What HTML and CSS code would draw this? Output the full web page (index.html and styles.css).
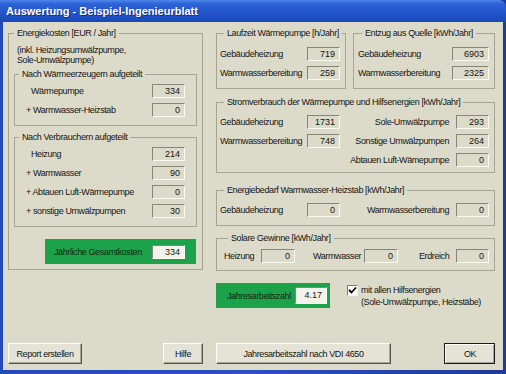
FILE: index.html
```html
<!DOCTYPE html>
<html lang="de">
<head>
    <meta charset="UTF-8">
    <title>Auswertung - Beispiel-Ingenieurblatt</title>
    <link rel="stylesheet" href="styles.css">
</head>
<body>
    <div class="window">
        <div class="titlebar">
            <span class="title">Auswertung - Beispiel-Ingenieurblatt</span>
        </div>
        <div class="client">
            <div class="main">
                <!-- linke Spalte: Kosten -->
                <fieldset class="group costs">
                    <legend>Energiekosten [EUR / Jahr]</legend>
                    <p class="note">(inkl. Heizungsumwälzpumpe,<br>Sole-Umwälzpumpe)</p>
                    <fieldset class="group sub sub-first">
                        <legend>Nach Wärmeerzeugern aufgeteilt</legend>
                        <div class="row"><span class="lbl plain">Wärmepumpe</span><span class="field">334</span></div>
                        <div class="row"><span class="lbl">+ Warmwasser-Heizstab</span><span class="field">0</span></div>
                    </fieldset>
                    <fieldset class="group sub sub-second">
                        <legend>Nach Verbrauchern aufgeteilt</legend>
                        <div class="row"><span class="lbl plain">Heizung</span><span class="field">214</span></div>
                        <div class="row"><span class="lbl">+ Warmwasser</span><span class="field">90</span></div>
                        <div class="row"><span class="lbl">+ Abtauen Luft-Wärmepumpe</span><span class="field">0</span></div>
                        <div class="row"><span class="lbl">+ sonstige Umwälzpumpen</span><span class="field">30</span></div>
                    </fieldset>
                    <div class="highlight total">
                        <span class="hl-label">Jährliche Gesamtkosten</span>
                        <span class="field light">334</span>
                    </div>
                </fieldset>

                <!-- rechte Spalte: Energien -->
                <div class="right">
                    <div class="pair">
                        <fieldset class="group run">
                            <legend>Laufzeit Wärmepumpe [h/Jahr]</legend>
                            <div class="grid2">
                                <span>Gebäudeheizung</span><span class="field">719</span>
                                <span>Warmwasserbereitung</span><span class="field">259</span>
                            </div>
                        </fieldset>
                        <fieldset class="group source">
                            <legend>Entzug aus Quelle [kWh/Jahr]</legend>
                            <div class="grid2">
                                <span>Gebäudeheizung</span><span class="field wide">6903</span>
                                <span>Warmwasserbereitung</span><span class="field wide">2325</span>
                            </div>
                        </fieldset>
                    </div>

                    <fieldset class="group power">
                        <legend>Stromverbrauch der Wärmepumpe und Hilfsenergien [kWh/Jahr]</legend>
                        <div class="grid4">
                            <span>Gebäudeheizung</span><span class="field">1731</span>
                            <span class="rlbl">Sole-Umwälzpumpe</span><span class="field">293</span>
                            <span>Warmwasserbereitung</span><span class="field">748</span>
                            <span class="rlbl">Sonstige Umwälzpumpen</span><span class="field">264</span>
                            <span></span><span></span>
                            <span class="rlbl">Abtauen Luft-Wämepumpe</span><span class="field">0</span>
                        </div>
                    </fieldset>

                    <fieldset class="group heater">
                        <legend>Energiebedarf Warmwasser-Heizstab [kWh/Jahr]</legend>
                        <div class="grid4">
                            <span>Gebäudeheizung</span><span class="field">0</span>
                            <span class="rlbl">Warmwasserbereitung</span><span class="field">0</span>
                        </div>
                    </fieldset>

                    <fieldset class="group solar">
                        <legend>Solare Gewinne [kWh/Jahr]</legend>
                        <div class="grid6">
                            <span>Heizung</span><span class="field">0</span>
                            <span class="pad-ww">Warmwasser</span><span class="field">0</span>
                            <span class="pad-erd">Erdreich</span><span class="field">0</span>
                        </div>
                    </fieldset>

                    <div class="jaz-row">
                        <div class="highlight jaz">
                            <span class="hl-label">Jahresarbeitszahl</span>
                            <span class="field light tall">4.17</span>
                        </div>
                        <label class="check">
                            <span class="box">
                                <svg width="9" height="9" viewBox="0 0 9 9"><path d="M1 4 L3.5 6.5 L8 1.5" fill="none" stroke="#000" stroke-width="1.8"/></svg>
                            </span>
                            <span class="check-text">mit allen Hilfsenergien<br>(Sole-Umwälzpumpe, Heizstäbe)</span>
                        </label>
                    </div>
                </div>
            </div>

            <div class="buttons">
                <div class="btn-group">
                    <button class="btn btn-report">Report erstellen</button>
                    <button class="btn btn-help">Hilfe</button>
                </div>
                <div class="btn-group">
                    <button class="btn btn-vdi">Jahresarbeitszahl nach VDI 4650</button>
                    <button class="btn btn-ok">OK</button>
                </div>
            </div>
        </div>
    </div>
</body>
</html>
```

FILE: styles.css
```css
* {
    margin: 0;
    padding: 0;
    box-sizing: border-box;
}
body {
    width: 506px;
    height: 374px;
    overflow: hidden;
    font-family: "Liberation Sans", Arial, sans-serif;
    font-size: 9px;
    letter-spacing: -0.4px;
    color: #141414;
    background: #2a44a8;
    white-space: nowrap;
}
.window {
    width: 506px;
    height: 374px;
    display: flex;
    flex-direction: column;
    padding: 0 3px 4px 3px;
    background: linear-gradient(90deg, #2449b8, #2a4fc2 50%, #1f3a9a);
}
.titlebar {
    height: 22px;
    margin: 0 -3px;
    padding-left: 6px;
    display: flex;
    align-items: center;
    background: linear-gradient(#4d86ea 0%, #2d62d8 18%, #2356cb 55%, #1d47b6 100%);
    border-top-right-radius: 7px;
}
.title {
    color: #fff;
    font-weight: bold;
    font-size: 11px;
    letter-spacing: 0;
    text-shadow: 1px 1px 0 #16307e;
}
.client {
    flex: 1;
    display: flex;
    flex-direction: column;
    justify-content: space-between;
    padding: 5px 8px 6px 5px;
    background: #dcdbca;
}
.main {
    display: grid;
    grid-template-columns: 195px 279px;
    column-gap: 13px;
    align-items: start;
}

/* Gruppenrahmen */
.group {
    border: 1px solid #a5a495;
    min-width: 0;
}
.group legend {
    line-height: 12px;
    padding: 0 3px;
    margin-left: 4px;
}
.field {
    display: block;
    width: 33px;
    height: 14px;
    line-height: 12px;
    text-align: right;
    padding-right: 4px;
    border: 1px solid;
    border-color: #86857a #fafaf4 #fafaf4 #86857a;
    background: #dcdbca;
    letter-spacing: 0;
}
.field.wide {
    width: 37px;
}
.field.light {
    background: #f3f3ec;
}
.field.tall {
    width: 32px;
    height: 17px;
    line-height: 15px;
}

/* linke Spalte */
.costs {
    padding: 6px 5px 5px 5px;
}
.costs > legend {
    margin-left: 0;
}
.note {
    line-height: 10px;
    padding-left: 3px;
}
.sub {
    display: flex;
    flex-direction: column;
    gap: 5px;
    padding: 4px 11px 8px 0;
}
.sub-first {
    margin-top: 3px;
}
.sub-second {
    margin-top: 5px;
}
.row {
    display: flex;
    justify-content: space-between;
    align-items: center;
    height: 14px;
    padding-left: 11px;
}
.lbl.plain {
    padding-left: 5px;
}
.highlight {
    display: flex;
    align-items: center;
    justify-content: space-between;
    height: 25px;
    background: #1ca24b;
    color: #0c2a12;
}
.total {
    margin: 12px 1px 0 31px;
    padding: 0 11px 0 9px;
}

/* rechte Spalte */
.right {
    display: flex;
    flex-direction: column;
}
.pair {
    display: flex;
    gap: 7px;
}
.run {
    width: 130px;
    padding: 8px 5px 8px 3px;
}
.source {
    width: 142px;
    padding: 8px 5px 8px 4px;
}
.grid2 {
    display: grid;
    grid-template-columns: 87px auto;
    row-gap: 5px;
    align-items: center;
}
.source .grid2 {
    grid-template-columns: 94px auto;
}
.power {
    margin-top: 7px;
    padding: 7px 5px 5px 3px;
}
.heater {
    margin-top: 11px;
    padding: 7px 5px 8px 3px;
}
.grid4 {
    display: grid;
    grid-template-columns: 87px 33px 1fr 33px;
    row-gap: 5px;
    align-items: center;
}
.rlbl {
    text-align: right;
    padding-right: 7px;
}
.solar {
    margin-top: 6px;
    padding: 5px 5px 7px 7px;
}
.grid6 {
    display: grid;
    grid-template-columns: 37px 34px 69px 34px 58px 33px;
    align-items: center;
}
.grid6 .field {
    width: 100%;
}
.pad-ww {
    padding-left: 18px;
}
.pad-erd {
    padding-left: 21px;
}
.jaz-row {
    display: flex;
    align-items: flex-start;
    margin-top: 12px;
}
.jaz {
    width: 114px;
    padding: 0 3px 0 11px;
}
.check {
    display: flex;
    margin: 1px 0 0 17px;
}
.box {
    width: 11px;
    height: 11px;
    margin-top: 1px;
    display: flex;
    align-items: center;
    justify-content: center;
    background: #fff;
    border: 1px solid;
    border-color: #7d7c70 #f4f4ee #f4f4ee #7d7c70;
}
.check-text {
    line-height: 12px;
    margin-left: 3px;
}

/* Schaltflaechen */
.buttons {
    display: grid;
    grid-template-columns: 195px 279px;
    column-gap: 13px;
}
.btn-group {
    display: flex;
    justify-content: space-between;
}
.btn {
    height: 21px;
    font-family: inherit;
    font-size: 9px;
    letter-spacing: -0.4px;
    color: #141414;
    background: #e4e3d6;
    border: 1px solid;
    border-color: #fdfdf8 #55554c #55554c #fdfdf8;
    box-shadow: inset -1px -1px 0 #a7a697;
}
.btn-report {
    width: 74px;
}
.btn-help {
    width: 40px;
}
.btn-vdi {
    width: 175px;
}
.btn-ok {
    width: 51px;
    outline: 1px solid #1a1a1a;
    outline-offset: -1px;
    border-width: 2px 1px 1px 2px;
}
```
